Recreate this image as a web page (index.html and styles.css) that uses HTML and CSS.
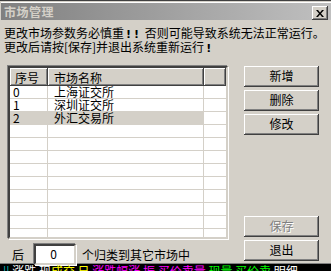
FILE: index.html
```html
<!DOCTYPE html>
<html lang="zh-CN">
<head>
<meta charset="utf-8">
<title>市场管理</title>
<link rel="stylesheet" href="styles.css">
</head>
<body>
<div class="window">
  <div class="titlebar">
    <span class="title">市场管理</span>
    <span class="close"><svg width="8" height="7" viewBox="0 0 8 7"><path d="M0 0h2l2 2.5L6 0h2L5 3.5 8 7H6L4 4.5 2 7H0l3-3.5z" fill="#000"/></svg></span>
  </div>
  <div class="body">
    <p class="warning">更改市场参数务必慎重<b class="bang">!!</b> 否则可能导致系统无法正常运行。<br>更改后请按[保存]并退出系统重新运行<b class="bang">!</b></p>
    <div class="main">
      <div class="leftcol">
        <div class="list">
          <div class="head">
            <div class="hc c1">序号</div>
            <div class="hc c2">市场名称</div>
            <div class="hc c3"></div>
          </div>
          <div class="rows">
            <div class="row"><div class="c c1">0</div><div class="c c2">上海证交所</div><div class="c c3"></div></div>
            <div class="row"><div class="c c1">1</div><div class="c c2">深圳证交所</div><div class="c c3"></div></div>
            <div class="row sel"><div class="c c1">2</div><div class="c c2">外汇交易所</div><div class="c c3"></div></div>
            <div class="row"><div class="c c1"></div><div class="c c2"></div><div class="c c3"></div></div>
            <div class="row"><div class="c c1"></div><div class="c c2"></div><div class="c c3"></div></div>
            <div class="row"><div class="c c1"></div><div class="c c2"></div><div class="c c3"></div></div>
            <div class="row"><div class="c c1"></div><div class="c c2"></div><div class="c c3"></div></div>
            <div class="row"><div class="c c1"></div><div class="c c2"></div><div class="c c3"></div></div>
            <div class="row"><div class="c c1"></div><div class="c c2"></div><div class="c c3"></div></div>
            <div class="row"><div class="c c1"></div><div class="c c2"></div><div class="c c3"></div></div>
            <div class="row"><div class="c c1"></div><div class="c c2"></div><div class="c c3"></div></div>
            <div class="row"><div class="c c1"></div><div class="c c2"></div><div class="c c3"></div></div>
          </div>
        </div>
        <div class="footer">
          <span class="lbl">后</span>
          <span class="input">0</span>
          <span class="lbl2">个归类到其它市场中</span>
        </div>
      </div>
      <div class="buttons">
        <div class="btn">新增</div>
        <div class="btn">删除</div>
        <div class="btn">修改</div>
        <div class="spacer"></div>
        <div class="btn disabled">保存</div>
        <div class="btn">退出</div>
      </div>
    </div>
  </div>
</div>
<div class="strip"><span class="cy">||</span> <span class="wh">涨跌 现 </span><span class="ye">成交 日</span> <span class="mg">涨跌幅涨 振 买价卖量</span> <span class="gr">现量 买价卖</span> <span class="wh">明细</span></div>
</body>
</html>
```
FILE: styles.css
```css
* { box-sizing: border-box; margin: 0; padding: 0; }
html, body { width: 331px; height: 271px; overflow: hidden; }
body {
  background: #000;
  font-family: "Noto Sans CJK SC", "Liberation Sans", sans-serif;
  font-size: 12px;
  color: #000;
}
.window {
  height: 264px;
  background: #d4d0c8;
  border-top: 1px solid #404040;
  border-bottom: 1px solid #808080;
  display: flex;
  flex-direction: column;
}
.titlebar {
  margin-top: 1px;
  border-top: 1px solid #fff;
  height: 20px;
  margin-left: 1px;
  background: linear-gradient(to right, #808080, #c0c0c0);
  display: flex;
  align-items: center;
  justify-content: space-between;
  padding: 0 3px 0 3px;
}
.title {
  color: #d4d0c8;
  font-weight: bold;
  font-size: 12px;
  line-height: 12px;
  letter-spacing: 0.5px;
}
.close {
  width: 16px;
  height: 14px;
  margin-top: 3px;
  background: #d4d0c8;
  box-shadow: inset -1px -1px #404040, inset 1px 1px #fff, inset -2px -2px #808080;
  display: flex;
  align-items: center;
  justify-content: center;
  padding-right: 1px;
}
.body {
  flex: 1;
  padding: 7px 0 0 4px;
  display: flex;
  flex-direction: column;
}
.warning {
  line-height: 12px;
  white-space: nowrap;
}
.bang { font-weight: bold; font-family: "DejaVu Sans", sans-serif; font-size: 11px; letter-spacing: 3px; padding-left: 2px; }
.main {
  margin-top: 11px;
  display: flex;
  gap: 17px;
  padding-left: 3px;
}
.leftcol {
  display: flex;
  flex-direction: column;
  width: 220px;
}
.list {
  width: 220px;
  height: 173px;
  border: 2px solid;
  border-color: #404040 #d4d0c8 #d4d0c8 #404040;
  box-shadow: -1px -1px #808080, 1px 1px #fff;
  background: #fff;
  overflow: hidden;
  margin-left: 1px;
}
.head {
  display: flex;
  height: 18px;
}
.hc {
  background: #d4d0c8;
  box-shadow: inset -1px -1px #404040, inset 1px 1px #fff, inset -2px -2px #808080;
  padding: 3px 0 0 5px;
  line-height: 13px;
  height: 18px;
}
.c1 { width: 38px; }
.c2 { width: 156px; }
.c3 { flex: 1; }
.hc.c2 { padding-left: 6px; }
.row {
  display: flex;
  height: 13px;
  border-bottom: 1px solid #d4d0c8;
  line-height: 12px;
}
.c { border-right: 1px solid #d4d0c8; padding-left: 3px; height: 12px; }
.c.c2 { padding-left: 6px; }
.c.c3 { border-right: none; }
.row.sel .c1, .row.sel .c2 { background: #d4d0c8; }
.footer {
  margin-top: 5px;
  display: flex;
  align-items: center;
  height: 21px;
}
.lbl { margin-left: 5px; width: 22px; }
.input {
  width: 42px;
  height: 21px;
  background: #fff;
  border: 2px solid;
  border-color: #404040 #d4d0c8 #d4d0c8 #404040;
  box-shadow: -1px -1px #808080, 1px 1px #fff;
  text-align: center;
  line-height: 16px;
  padding-right: 3px;
}
.lbl2 { margin-left: 6px; }
.buttons {
  display: flex;
  flex-direction: column;
  gap: 3px;
  width: 75px;
  height: 195px;
}
.spacer { flex: 1; }
.btn {
  height: 21px;
  background: #d4d0c8;
  box-shadow: inset -1px -1px #404040, inset 1px 1px #fff, inset -2px -2px #808080;
  text-align: center;
  line-height: 20px;
  font-size: 12px;
}
.btn.disabled { color: #808080; text-shadow: 1px 1px #fff; }
.strip {
  height: 7px;
  overflow: hidden;
  line-height: 12px;
  font-size: 12px;
  white-space: nowrap;
  padding: 1px 0 0 3px;
}
.strip span { display: inline-block; margin-top: 0; }
.cy { color: #00c0c0; }
.wh { color: #fff; }
.ye { color: #ffff00; }
.mg { color: #ff00ff; }
.gr { color: #00ff00; }
```
